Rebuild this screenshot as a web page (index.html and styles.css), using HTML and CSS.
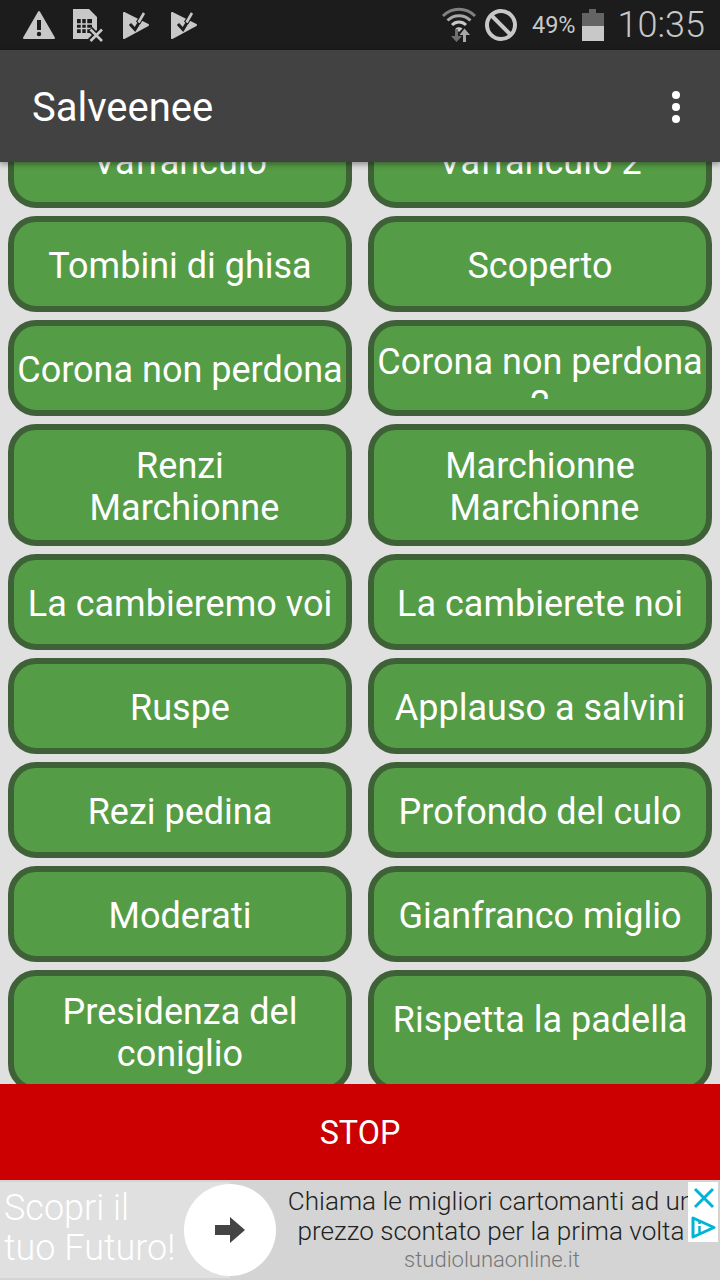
FILE: index.html

```html
<!DOCTYPE html>
<html>
    <head>
        <meta charset="utf-8">
        <title>Salveenee</title>
        <meta name="viewport" content="width=device-width, initial-scale=1.0">
        <link rel="stylesheet" href="styles.css">
    </head>
    <body>
        <div class="status">
            <svg class="status__warn" width="34" height="32" viewBox="0 0 34 32">
                <polygon points="17,3 32,29 2,29" fill="#c8c8c8" stroke="#c8c8c8" stroke-width="2" stroke-linejoin="round"/>
                <rect x="15" y="11" width="4" height="10" fill="#1c1c1c"/>
                <circle cx="17" cy="25" r="2.2" fill="#1c1c1c"/>
            </svg>
            <svg class="status__sim" width="32" height="34" viewBox="0 0 32 34">
                <path d="M1 1H17L25 9V31H1Z" fill="#c8c8c8"/>
                <path d="M5 11H20V25H5Z" fill="#1c1c1c"/>
                <path d="M9.500 11V25M14.500 11V25M5 16H20M5 20.500H20" stroke="#c8c8c8" stroke-width="1.500"/>
                <path d="M18 21L30 33M30 21L18 33" stroke="#1c1c1c" stroke-width="6"/>
                <path d="M18.500 21.500L30 33M30 21.500L18.500 33" stroke="#c8c8c8" stroke-width="2.600"/>
            </svg>
            <svg class="status__flag" width="28" height="30" viewBox="0 0 28 30">
                <path d="M2 3L26 15L2 28Z" fill="#c8c8c8" stroke="#c8c8c8" stroke-width="2" stroke-linejoin="round"/>
                <path d="M8 14L13 19.500L17.500 12" fill="none" stroke="#1c1c1c" stroke-width="3"/>
                <path d="M16 13L22.500 3" fill="none" stroke="#1c1c1c" stroke-width="5"/>
                <path d="M16.500 12.500L22 3" fill="none" stroke="#c8c8c8" stroke-width="2.600"/>
            </svg>
            <svg class="status__flag status__flag--next" width="28" height="30" viewBox="0 0 28 30">
                <path d="M2 3L26 15L2 28Z" fill="#c8c8c8" stroke="#c8c8c8" stroke-width="2" stroke-linejoin="round"/>
                <path d="M8 14L13 19.500L17.500 12" fill="none" stroke="#1c1c1c" stroke-width="3"/>
                <path d="M16 13L22.500 3" fill="none" stroke="#1c1c1c" stroke-width="5"/>
                <path d="M16.500 12.500L22 3" fill="none" stroke="#c8c8c8" stroke-width="2.600"/>
            </svg>
            <div class="status__right">
                <svg width="36" height="36" viewBox="0 0 36 36">
                    <path d="M2 9C11 0 25 0 34 9" fill="none" stroke="#808080" stroke-width="3"/>
                    <path d="M6.500 13.500C13 7 23 7 29.500 13.500" fill="none" stroke="#a8a8a8" stroke-width="3"/>
                    <path d="M11 18C15 14 21 14 25 18" fill="none" stroke="#c8c8c8" stroke-width="3"/>
                    <path d="M14.500 21.500C16.500 19.800 19.500 19.800 21.500 21.500L18 25Z" fill="#c8c8c8"/>
                    <path d="M14 22V29H10L15.500 35L21 29H17V22Z" fill="#707070"/>
                    <path d="M22 35V28H18.500L23.500 21.500L29 28H25V35Z" fill="#a8a8a8"/>
                </svg>
                <svg class="status__block" width="34" height="34" viewBox="0 0 34 34">
                    <circle cx="17" cy="17" r="14" fill="none" stroke="#c8c8c8" stroke-width="4"/>
                    <path d="M7 7L27 27" stroke="#c8c8c8" stroke-width="4"/>
                </svg>
                <span class="status__pct">49%</span>
                <svg class="status__batt" width="22" height="32" viewBox="0 0 22 32">
                    <path d="M7 0H14V4H22V17H0V4H7Z" fill="#646464"/>
                    <rect y="17" width="22" height="15" fill="#c8c8c8"/>
                </svg>
                <span class="status__time">10:35</span>
            </div>
        </div>

        <div class="toolbar">
            <h1 class="toolbar__title">Salveenee</h1>
            <div class="toolbar__menu"><i></i><i></i><i></i></div>
        </div>

        <div class="list">
            <div class="list__inner">
                <button class="btn"><span class="btn__label">Vaffanculo</span></button>
                <button class="btn"><span class="btn__label">Vaffanculo 2</span></button>
                <button class="btn"><span class="btn__label">Tombini di ghisa</span></button>
                <button class="btn"><span class="btn__label">Scoperto</span></button>
                <button class="btn"><span class="btn__label">Corona non perdona</span></button>
                <button class="btn btn--clip"><span class="btn__label">Corona non perdona 2</span></button>
                <button class="btn"><span class="btn__label">Renzi<br>&nbsp;Marchionne</span></button>
                <button class="btn"><span class="btn__label">Marchionne<br>&nbsp;Marchionne</span></button>
                <button class="btn"><span class="btn__label">La cambieremo voi</span></button>
                <button class="btn"><span class="btn__label">La cambierete noi</span></button>
                <button class="btn"><span class="btn__label">Ruspe</span></button>
                <button class="btn"><span class="btn__label">Applauso a salvini</span></button>
                <button class="btn"><span class="btn__label">Rezi pedina</span></button>
                <button class="btn"><span class="btn__label">Profondo del culo</span></button>
                <button class="btn"><span class="btn__label">Moderati</span></button>
                <button class="btn"><span class="btn__label">Gianfranco miglio</span></button>
                <button class="btn"><span class="btn__label">Presidenza del coniglio</span></button>
                <button class="btn btn--top"><span class="btn__label">Rispetta la padella</span></button>
            </div>
        </div>

        <button class="stop">STOP</button>

        <div class="ad">
            <div class="ad__lead">Scopri il<br>tuo Futuro!</div>
            <div class="ad__circle">
                <svg width="30" height="26" viewBox="0 0 30 26">
                    <path d="M0 8H15V0L30 13L15 26V18H0Z" fill="#444"/>
                </svg>
            </div>
            <div class="ad__body">
                <p class="ad__text">Chiama le migliori cartomanti ad un<br>prezzo scontato per la prima volta</p>
                <p class="ad__site">studiolunaonline.it</p>
            </div>
            <div class="ad__choice">
                <svg width="30" height="60" viewBox="0 0 30 60">
                    <path d="M7 7L25 25M25 7L7 25" stroke="#00b4d8" stroke-width="3"/>
                    <path d="M5 36V55L26 45.500Z" fill="none" stroke="#00b4d8" stroke-width="3" stroke-linejoin="round"/>
                    <path d="M11.500 44V51M11.500 40V42" stroke="#00b4d8" stroke-width="2.500"/>
                </svg>
            </div>
        </div>
    </body>
</html>
```

FILE: styles.css

```css
:root {
    --font-main: Roboto, 'Liberation Sans', Arial, sans-serif;

    --color-status: #1c1c1c;
    --color-icon: #c8c8c8;
    --color-bar: #424242;
    --color-bg: #e0e0e0;
    --color-btn: #559c46;
    --color-btn-border: #3e6137;
    --color-stop: #cc0000;
    --color-ad: #d4d4d4;
}
* {
    box-sizing: border-box;
}
html, body {
    margin: 0;
    height: 100%;
}
body {
    width: 720px;
    height: 1280px;
    display: flex;
    flex-direction: column;
    overflow: hidden;
    font-family: var(--font-main);
    background-color: var(--color-bg);
}

/* status bar */
.status {
    flex: 0 0 50px;
    display: flex;
    align-items: center;
    padding-left: 22px;
    padding-right: 15px;
    background-color: var(--color-status);
    color: var(--color-icon);
}
.status__sim {
    margin-left: 16px;
}
.status__flag {
    margin-left: 18px;
}
.status__flag--next {
    margin-left: 20px;
}
.status__right {
    margin-left: auto;
    display: flex;
    align-items: center;
}
.status__block {
    margin-left: 7px;
}
.status__pct {
    margin-left: 14px;
    font-size: 23.5px;
}
.status__batt {
    margin-left: 6px;
}
.status__time {
    margin-left: 14px;
    font-size: 36px;
    font-weight: 300;
}

/* toolbar */
.toolbar {
    flex: 0 0 112px;
    position: relative;
    z-index: 2;
    display: flex;
    align-items: center;
    justify-content: space-between;
    padding-top: 2px;
    padding-left: 32px;
    padding-right: 40px;
    background-color: var(--color-bar);
    box-shadow: 0 2px 6px rgba(0, 0, 0, 0.4);
}
.toolbar__title {
    margin: 0;
    font-size: 40px;
    font-weight: 400;
    color: #fff;
}
.toolbar__menu {
    display: flex;
    flex-direction: column;
    gap: 4px;
}
.toolbar__menu i {
    width: 8px;
    height: 8px;
    border-radius: 50%;
    background-color: #fff;
}

/* sound buttons */
.list {
    flex: 1;
    min-height: 0;
    overflow: hidden;
}
.list__inner {
    display: grid;
    grid-template-columns: 344px 344px;
    column-gap: 16px;
    row-gap: 8px;
    margin-top: -50px;
    padding-left: 8px;
}
.btn {
    display: flex;
    align-items: center;
    justify-content: center;
    min-height: 96px;
    margin: 0;
    padding: 15px 0 11px;
    border: 6px solid var(--color-btn-border);
    border-radius: 28px;
    background-color: var(--color-btn);
    font-family: var(--font-main);
    font-size: 36px;
    line-height: 42px;
    color: #fff;
    text-align: center;
}
.btn--clip {
    height: 96px;
}
.btn--clip .btn__label {
    align-self: flex-start;
    height: 58px;
    overflow: hidden;
}
.btn--top {
    align-items: flex-start;
    padding-top: 23px;
}

/* stop */
.stop {
    flex: 0 0 96px;
    position: relative;
    z-index: 1;
    padding-top: 2px;
    border: 0;
    background-color: var(--color-stop);
    font-family: var(--font-main);
    font-size: 32.3px;
    color: #fff;
}

/* ad */
.ad {
    flex: 0 0 100px;
    position: relative;
    z-index: 1;
    display: flex;
    align-items: center;
    border-top: 2px solid var(--color-ad);
    border-bottom: 2px solid var(--color-ad);
    background: linear-gradient(to right, var(--color-bg) 230px, var(--color-ad) 230px);
}
.ad__lead {
    flex: 0 0 184px;
    padding-left: 4px;
    padding-bottom: 4px;
    font-size: 36px;
    font-weight: 300;
    line-height: 40px;
    color: #fff;
}
.ad__circle {
    flex: 0 0 92px;
    height: 92px;
    display: flex;
    align-items: center;
    justify-content: center;
    border-radius: 50%;
    background-color: #fff;
}
.ad__body {
    flex: 0 0 430px;
    text-align: center;
    white-space: nowrap;
}
.ad__text {
    margin: 0;
    font-size: 26.1px;
    font-weight: 300;
    line-height: 30px;
    color: #222;
}
.ad__site {
    margin: 0;
    padding-left: 2px;
    font-size: 22px;
    font-weight: 300;
    line-height: 28px;
    color: #777;
}
.ad__choice {
    position: absolute;
    top: 0;
    right: 2px;
    width: 30px;
    height: 60px;
    background-color: #fff;
}
.ad__choice svg {
    display: block;
}
```
